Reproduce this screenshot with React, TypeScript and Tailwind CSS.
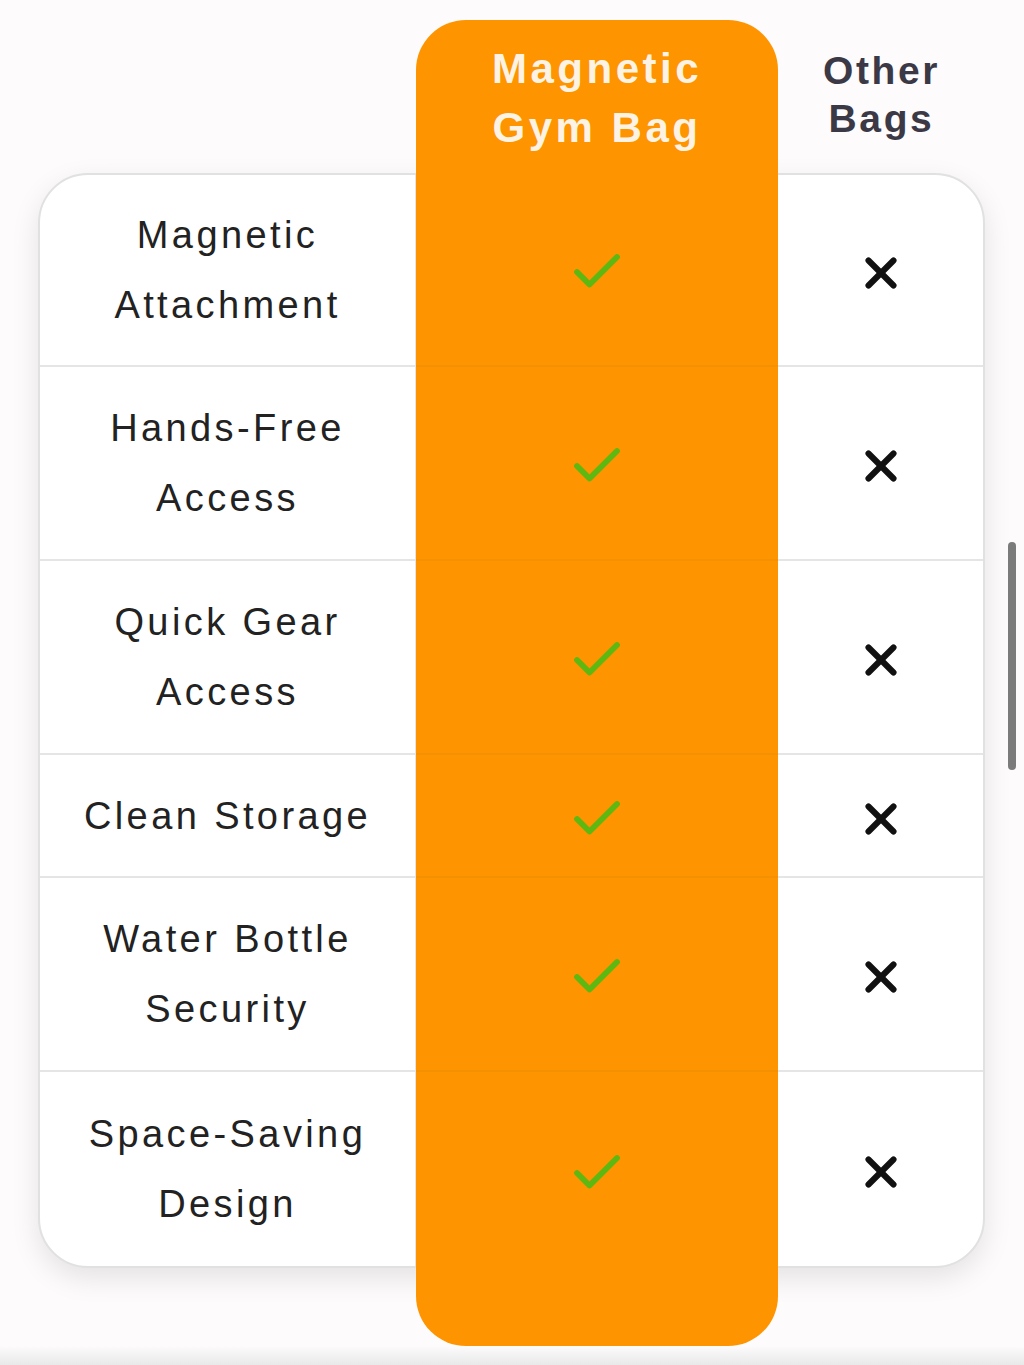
import { Check, X } from 'lucide-react';

const features = [
  { label: ['Magnetic', 'Attachment'], h: 'h-[192px]' },
  { label: ['Hands-Free', 'Access'], h: 'h-[194px]' },
  { label: ['Quick Gear', 'Access'], h: 'h-[194px]' },
  { label: ['Clean Storage'], h: 'h-[123px]' },
  { label: ['Water Bottle', 'Security'], h: 'h-[194px]' },
  { label: ['Space-Saving', 'Design'], h: 'h-[194px]' },
];

export default function App() {
  return (
    <div className="relative w-[1024px] h-[1365px] bg-[#fdfbfb] overflow-hidden flex flex-col font-['Liberation_Sans',Arial,sans-serif]">
      <div className="pl-[38px] pt-[20px]">
        {/* column headers */}
        <div className="grid grid-cols-[378px_362px_207px]">
          <div />
          <div className="h-[153px] bg-[#fe9400] rounded-t-[50px] pt-[19px] text-center text-[42px] leading-[59px] font-bold tracking-[3.5px] text-[#fdf3e4]">
            Magnetic
            <br />
            Gym Bag
          </div>
          <div className="pt-[27px] text-center text-[39px] leading-[48px] font-bold tracking-[2.6px] text-[#3b3946]">
            Other
            <br />
            Bags
          </div>
        </div>

        {/* comparison card */}
        <div className="w-[947px] rounded-[50px] border-2 border-[#e1e1e1] bg-white shadow-[0_10px_28px_rgba(0,0,0,0.1)]">
          {features.map((f, i) => {
            const first = i === 0;
            const last = i === features.length - 1;
            return (
              <div key={i} className={`flex ${f.h}`}>
                <div
                  className={`w-[376px] flex flex-col items-center justify-center border-r border-r-[#e2e6ec] text-[38px] leading-[70px] tracking-[3.4px] text-[#222222] ${
                    last ? '' : 'border-b-2 border-b-[#e5e5e5]'
                  }`}
                >
                  {f.label.map((line) => (
                    <span key={line}>{line}</span>
                  ))}
                </div>
                <div
                  className={`relative z-10 w-[362px] flex items-center justify-center bg-[#fe9400] ${
                    first ? '-mt-[2px]' : ''
                  } ${last ? '-mb-[2px]' : 'border-b-2 border-b-[#f59000]'}`}
                >
                  <Check size={60} strokeWidth={2.3} color="#5db812" className="mt-[6px]" />
                </div>
                <div
                  className={`w-[205px] flex items-center justify-center ${
                    last ? '' : 'border-b-2 border-b-[#e5e5e5]'
                  }`}
                >
                  <X size={50} strokeWidth={2.9} color="#111111" className="mt-[6px]" />
                </div>
              </div>
            );
          })}
        </div>

        <div className="ml-[378px] w-[362px] h-[78px] bg-[#fe9400] rounded-b-[50px]" />
      </div>

      <div className="mt-auto h-[20px] bg-gradient-to-b from-[#fdfbfb] to-[#e9e9e9]" />

      {/* overlay scrollbar */}
      <div className="absolute right-[8px] top-[542px] w-[8px] h-[228px] rounded-full bg-[#7b7b7b]" />
    </div>
  );
}
